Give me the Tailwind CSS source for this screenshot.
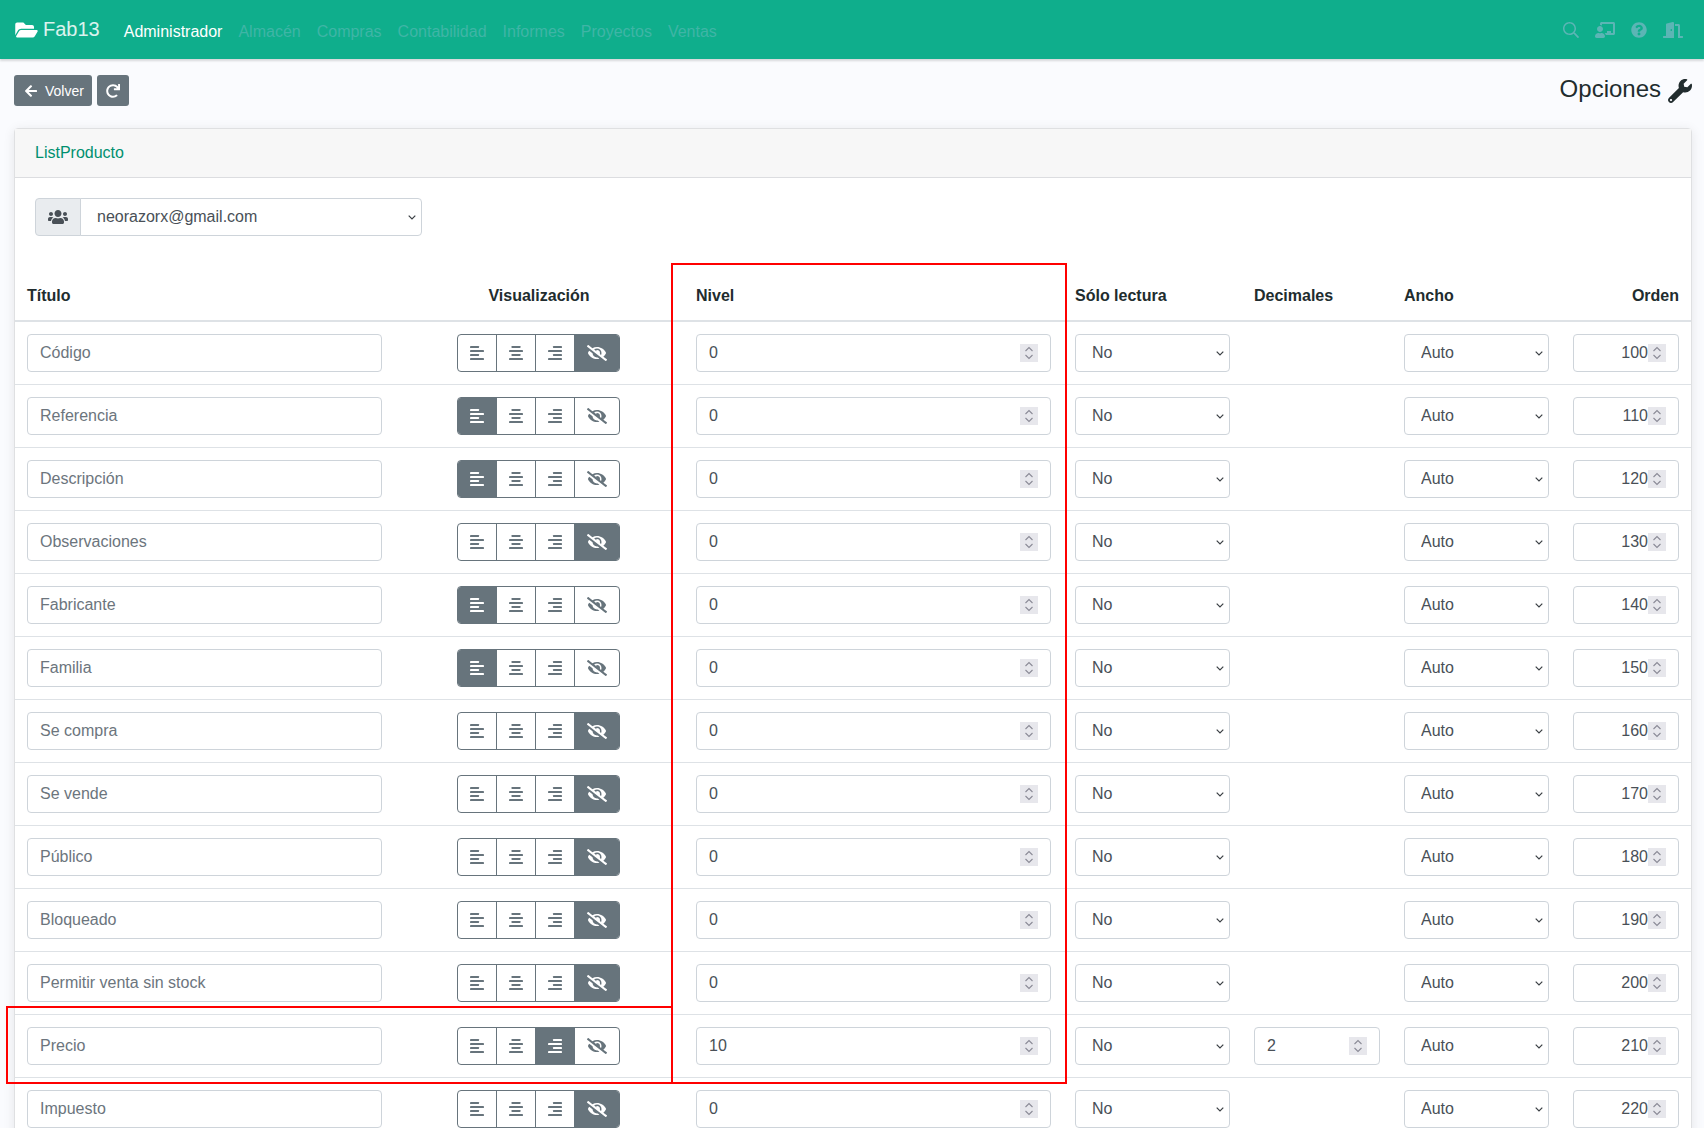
<!DOCTYPE html>
<html lang="es">
<head>
<meta charset="utf-8">
<title>Opciones</title>
<script src="https://cdn.jsdelivr.net/npm/@tailwindcss/browser@4"></script>
</head>
<body class="bg-[#fafbfe] font-['Liberation_Sans',Arial,sans-serif] text-[#212c2e] text-base">
<svg class="hidden" xmlns="http://www.w3.org/2000/svg">
  <symbol id="al" viewBox="0 0 448 512"><rect y="32" width="288" height="64" rx="13"/><rect y="160" width="448" height="64" rx="13"/><rect y="288" width="288" height="64" rx="13"/><rect y="416" width="448" height="64" rx="13"/></symbol>
  <symbol id="ac" viewBox="0 0 448 512"><rect x="80" y="32" width="288" height="64" rx="13"/><rect y="160" width="448" height="64" rx="13"/><rect x="80" y="288" width="288" height="64" rx="13"/><rect y="416" width="448" height="64" rx="13"/></symbol>
  <symbol id="ar" viewBox="0 0 448 512"><rect x="160" y="32" width="288" height="64" rx="13"/><rect y="160" width="448" height="64" rx="13"/><rect x="160" y="288" width="288" height="64" rx="13"/><rect y="416" width="448" height="64" rx="13"/></symbol>
  <symbol id="es" viewBox="0 0 640 512"><path d="M320 400c-75.85 0-137.25-58.71-142.9-133.11L72.2 185.82c-13.79 17.3-26.48 35.59-36.72 55.59a32.35 32.35 0 0 0 0 29.19C89.71 376.41 197.07 448 320 448c26.91 0 52.87-4 77.89-10.46L346 397.39a144.13 144.13 0 0 1-26 2.61zm313.82 58.1l-110.55-85.44a331.25 331.25 0 0 0 81.25-102.07 32.35 32.35 0 0 0 0-29.19C550.29 135.59 442.93 64 320 64a308.15 308.15 0 0 0-147.32 37.7L45.46 3.37A16 16 0 0 0 23 6.18L3.37 31.45A16 16 0 0 0 6.18 53.9l588.36 454.73a16 16 0 0 0 22.46-2.81l19.64-25.27a16 16 0 0 0-2.82-22.45zm-183.72-142l-39.3-30.38A94.75 94.75 0 0 0 416 256a94.76 94.76 0 0 0-121.31-92.21A47.65 47.65 0 0 1 304 192a46.64 46.64 0 0 1-1.54 10l-73.61-56.89A142.31 142.31 0 0 1 320 112a143.92 143.92 0 0 1 144 144c0 21.63-5.29 41.79-13.9 60.11z"/></symbol>
  <symbol id="spin" viewBox="0 0 18 18"><rect width="18" height="18" fill="#e7e7ec"/><path d="M5.5 7 9 3.5 12.5 7M5.5 11 9 14.5 12.5 11" fill="none" stroke="#8a8a96" stroke-width="1.1"/></symbol>
  <symbol id="caret" viewBox="0 0 8 5"><path d="M.7.7 4 4l3.3-3.3" fill="none" stroke="#3a3f44" stroke-width="1.2"/></symbol>
</svg>
<div class="h-[1128px] overflow-hidden relative">
  <nav class="h-[59px] bg-[#0fae8c] shadow-[0_2px_2px_rgba(0,0,0,0.14)] flex items-center pl-[15px] pr-[21px]">
    <svg class="w-[23px] h-5 fill-white mr-[5px]" viewBox="0 0 576 512"><path d="M572.694 292.093L500.27 416.248A63.997 63.997 0 0 1 444.989 448H45.025c-18.523 0-30.064-20.093-20.731-36.093l72.424-124.155A64 64 0 0 1 152 256h399.964c18.523 0 30.064 20.093 20.73 36.093zM152 224h328v-48c0-26.51-21.49-48-48-48H272l-64-64H48C21.49 64 0 85.49 0 112v278.046l69.077-118.418C86.214 242.25 118.112 224 152 224z"/></svg>
    <span class="text-xl text-white/85 mr-4 -mt-[2px]">Fab13</span>
    <div class="flex text-base text-[#3fb5a6] mt-[5px]">
      <a class="px-2 text-white">Administrador</a>
      <a class="px-2">Almacén</a>
      <a class="px-2">Compras</a>
      <a class="px-2">Contabilidad</a>
      <a class="px-2">Informes</a>
      <a class="px-2">Proyectos</a>
      <a class="px-2">Ventas</a>
    </div>
    <div class="ml-auto flex items-center gap-[16px] fill-[#5cb5b5]">
      <svg class="w-4 h-4" viewBox="0 0 512 512"><path d="M508.5 468.9L387.1 347.5c-2.3-2.3-5.3-3.5-8.5-3.5h-13.2c31.5-36.5 50.6-84 50.6-136C416 93.1 322.9 0 208 0S0 93.1 0 208s93.1 208 208 208c52 0 99.5-19.1 136-50.6v13.2c0 3.2 1.3 6.2 3.5 8.5l121.4 121.4c4.7 4.7 12.3 4.7 17 0l22.6-22.6c4.7-4.7 4.7-12.3 0-17zM208 368c-88.4 0-160-71.6-160-160S119.6 48 208 48s160 71.6 160 160-71.6 160-160 160z"/></svg>
      <svg class="w-5 h-4" viewBox="0 0 640 512"><path d="M208 352c-2.39 0-4.78.35-7.06 1.09C187.98 357.3 174.35 360 160 360c-14.35 0-27.98-2.7-40.95-6.91-2.28-.74-4.66-1.09-7.05-1.09C49.94 352-.33 402.48 0 464.62.14 490.88 21.73 512 48 512h224c26.27 0 47.86-21.12 48-47.38.33-62.14-49.94-112.62-112-112.62zm-48-32c53.02 0 96-42.98 96-96s-42.98-96-96-96-96 42.98-96 96 42.98 96 96 96zM592 0H208c-26.47 0-48 22.25-48 49.59V96c23.42 0 45.1 6.78 64 17.8V64h352v288h-64v-64H384v64h-76.24c19.1 16.69 33.12 38.73 39.69 64H592c26.47 0 48-22.25 48-49.59V49.59C640 22.25 618.47 0 592 0z"/></svg>
      <svg class="w-4 h-4" viewBox="0 0 512 512"><path d="M504 256c0 136.997-111.043 248-248 248S8 392.997 8 256C8 119.083 119.043 8 256 8s248 111.083 248 248zM262.655 90c-54.497 0-89.255 22.957-116.549 63.758-3.536 5.286-2.353 12.415 2.715 16.258l34.699 26.31c5.205 3.947 12.621 3.008 16.665-2.122 17.864-22.658 30.113-35.797 57.303-35.797 20.429 0 45.698 13.148 45.698 32.958 0 14.976-12.363 22.667-32.534 33.976C247.128 238.528 216 254.941 216 296v4c0 6.627 5.373 12 12 12h56c6.627 0 12-5.373 12-12v-1.333c0-28.462 83.186-29.647 83.186-106.667 0-58.002-60.165-102-116.531-102zM256 338c-25.365 0-46 20.635-46 46 0 25.364 20.635 46 46 46s46-20.636 46-46c0-25.365-20.635-46-46-46z"/></svg>
      <svg class="w-5 h-4" viewBox="0 0 640 512"><path d="M624 448h-80V113.45C544 86.19 522.47 64 496 64H384v64h96v384h144c8.84 0 16-7.16 16-16v-32c0-8.84-7.16-16-16-16zM312.24 1.01l-192 49.74C105.99 54.44 96 67.7 96 82.92V448H16c-8.84 0-16 7.16-16 16v32c0 8.84 7.16 16 16 16h336V33.18c0-21.58-19.56-37.41-39.76-32.17zM264 288c-13.25 0-24-14.33-24-32 0-17.67 10.75-32 24-32s24 14.33 24 32c0 17.67-10.75 32-24 32z"/></svg>
    </div>
  </nav>

  <main class="pt-4 pl-[14px] pr-3">
    <div class="flex items-center h-[31px] gap-[5px]">
      <button class="h-[31px] w-[78px] rounded-[3px] bg-[#67747c] text-white text-sm flex items-center pl-[11px] gap-[8px]">
        <svg class="w-3 h-[14px] fill-white" viewBox="0 0 448 512"><path d="M257.5 445.1l-22.2 22.2c-9.4 9.4-24.6 9.4-33.9 0L7 273c-9.4-9.4-9.4-24.6 0-33.9L201.4 44.7c9.4-9.4 24.6-9.4 33.9 0l22.2 22.2c9.5 9.5 9.3 25-.4 34.3L136.6 216H424c13.3 0 24 10.7 24 24v32c0 13.3-10.7 24-24 24H136.6l120.5 114.8c9.8 9.3 10 24.8.4 34.3z"/></svg>
        Volver
      </button>
      <button class="h-[31px] w-8 rounded-[3px] bg-[#67747c] flex items-center justify-center">
        <svg class="w-[14px] h-[14px] fill-white" viewBox="0 0 512 512"><path d="M500.33 0h-47.41a12 12 0 0 0-12 12.57l4 82.76A247.42 247.42 0 0 0 256 8C119.34 8 7.9 119.53 8 256.19 8.1 393.07 119.1 504 256 504a247.1 247.1 0 0 0 166.18-63.91 12 12 0 0 0 .48-17.43l-34-34a12 12 0 0 0-16.38-.55A176 176 0 1 1 402.1 157.8l-101.53-4.87a12 12 0 0 0-12.57 12v47.41a12 12 0 0 0 12 12h200.33a12 12 0 0 0 12-12V12a12 12 0 0 0-12-12z"/></svg>
      </button>
      <div class="ml-auto flex items-center gap-[7px] text-2xl">
        <span class="pb-1">Opciones</span>
        <svg class="w-6 h-6 fill-[#212c2e]" viewBox="0 0 512 512"><path d="M507.73 109.1c-2.24-9.03-13.54-12.09-20.12-5.51l-74.36 74.36-67.88-11.31-11.31-67.88 74.36-74.36c6.62-6.62 3.43-17.9-5.66-20.16-47.38-11.74-99.55.91-136.58 37.93-39.64 39.64-50.55 97.1-34.05 147.2L18.74 402.76c-24.99 24.99-24.99 65.51 0 90.5 24.99 24.99 65.51 24.99 90.5 0l213.21-213.21c50.12 16.71 107.47 5.68 147.37-34.22 37.07-37.07 49.7-89.32 37.91-136.73zM64 472c-13.25 0-24-10.75-24-24 0-13.26 10.75-24 24-24s24 10.74 24 24c0 13.25-10.75 24-24 24z"/></svg>
      </div>
    </div>

    <section class="mt-[22px] border border-[#dfe0e2] rounded-[4px] bg-white shadow-[0_2px_12px_rgba(0,0,0,0.09)]">
      <header class="h-[49px] bg-[#f7f7f7] border-b border-[#dcdde0] flex items-center pl-[20px] text-[#00906f]">ListProducto</header>
      <div class="pt-[20px] pb-[36px] pl-[20px]">
        <div class="flex h-[38px] w-[387px]">
          <span class="w-[46px] flex items-center justify-center bg-[#e9ecef] border border-[#ced4da] rounded-l-[4px]">
            <svg class="w-5 h-4 fill-[#495057]" viewBox="0 0 640 512"><path d="M96 224c35.3 0 64-28.7 64-64s-28.7-64-64-64-64 28.7-64 64 28.7 64 64 64zm448 0c35.3 0 64-28.7 64-64s-28.7-64-64-64-64 28.7-64 64 28.7 64 64 64zm32 32h-64c-17.6 0-33.5 7.1-45.1 18.6 40.3 22.1 68.9 62 75.1 109.4h66c17.7 0 32-14.3 32-32v-32c0-35.3-28.7-64-64-64zm-256 0c61.9 0 112-50.1 112-112S381.9 32 320 32 208 82.1 208 144s50.1 112 112 112zm76.8 32h-8.3c-20.8 10-43.9 16-68.5 16s-47.6-6-68.5-16h-8.3C179.6 288 128 339.6 128 403.2V432c0 26.5 21.5 48 48 48h288c26.5 0 48-21.5 48-48v-28.8c0-63.6-51.6-115.2-115.2-115.2zm-223.7-13.4C161.5 263.1 145.6 256 128 256H64c-35.3 0-64 28.7-64 64v32c0 17.7 14.3 32 32 32h65.9c6.3-47.4 34.9-87.3 75.2-109.4z"/></svg>
          </span>
          <div class="relative flex-1 -ml-px">
            <select class="appearance-none h-[38px] w-full border border-[#ced4da] rounded-r-[4px] bg-white text-[#495057] pl-4 pr-5"><option>neorazorx@gmail.com</option></select>
            <svg class="absolute right-[6px] top-[17px] w-2 h-[5px] pointer-events-none"><use href="#caret"/></svg>
          </div>
        </div>
      </div>
      <table class="w-full table-fixed border-collapse">
        <colgroup><col class="w-[379px]"><col class="w-[290px]"><col class="w-[379px]"><col class="w-[179px]"><col class="w-[150px]"><col class="w-[169px]"><col></colgroup>
        <thead>
          <tr class="border-b-2 border-[#dee2e6] h-[49px] font-bold">
            <th class="px-3 text-left">Título</th>
            <th class="px-3 text-center">Visualización</th>
            <th class="px-3 text-left">Nivel</th>
            <th class="px-3 text-left">Sólo lectura</th>
            <th class="px-3 text-left">Decimales</th>
            <th class="px-3 text-left">Ancho</th>
            <th class="px-3 text-right">Orden</th>
          </tr>
        </thead>
        <tbody id="rows"></tbody>
      </table>
    </section>
  </main>

  <!-- Red annotation frames drawn over the screenshot -->
  <div class="absolute left-[671px] top-[263px] w-[396px] h-[821px] border-2 border-[#f00] pointer-events-none"></div>
  <div class="absolute left-[6px] top-[1006px] w-[667px] h-[78px] border-2 border-[#f00] pointer-events-none"></div>
</div>
<script>
const data=[["Código",3,0,100],["Referencia",0,0,110],["Descripción",0,0,120],["Observaciones",3,0,130],["Fabricante",0,0,140],["Familia",0,0,150],["Se compra",3,0,160],["Se vende",3,0,170],["Público",3,0,180],["Bloqueado",3,0,190],["Permitir venta sin stock",3,0,200],["Precio",2,10,210,2],["Impuesto",3,0,220]];
const field="h-[38px] w-full border border-[#ced4da] rounded-[4px] bg-white text-[#495057] block";
const num=(v,extra)=>`<div class="relative"><input type="number" class="${field} appearance-none [&::-webkit-inner-spin-button]:appearance-none ${extra}" value="${v}"><svg class="absolute right-[13px] top-[10px] w-[18px] h-[18px] pointer-events-none"><use href="#spin"/></svg></div>`;
const sel=t=>`<div class="relative"><select class="${field} appearance-none pl-4 pr-5"><option>${t}</option></select><svg class="absolute right-[6px] top-[17px] w-2 h-[5px] pointer-events-none"><use href="#caret"/></svg></div>`;
const btn=(id,w,on,last)=>`<span class="${last?'flex-1':'w-[39px] border-r border-[#67747c]'} flex items-center justify-center ${on?'bg-[#67747c] text-white fill-white':'fill-[#67747c]'}"><svg class="${w} h-4"><use href="#${id}"/></svg></span>`;
document.getElementById('rows').innerHTML=data.map(d=>`<tr class="border-b border-[#dee2e6] h-[63px]">
<td class="px-3"><input class="${field} px-3 placeholder:text-[#6c757d]" placeholder="${d[0]}"></td>
<td class="px-3"><div class="w-[163px] h-[38px] ml-[51px] flex border border-[#67747c] rounded-[4px] overflow-hidden">${btn('al','w-[14px]',d[1]==0)}${btn('ac','w-[14px]',d[1]==1)}${btn('ar','w-[14px]',d[1]==2)}${btn('es','w-5',d[1]==3,true)}</div></td>
<td class="px-3">${num(d[2],'px-3')}</td>
<td class="px-3">${sel('No')}</td>
<td class="px-3">${d[4]?num(d[4],'px-3'):''}</td>
<td class="px-3">${sel('Auto')}</td>
<td class="px-3">${num(d[3],'text-right pl-3 pr-[30px]')}</td>
</tr>`).join('');
</script>
</body>
</html>
